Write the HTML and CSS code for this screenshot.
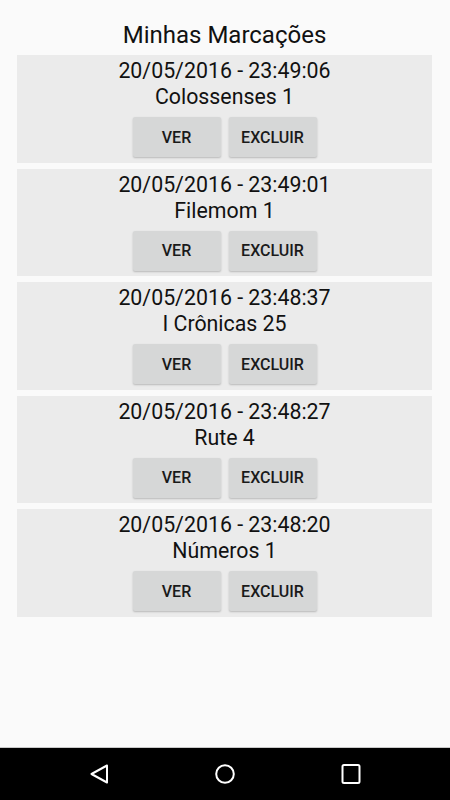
FILE: index.html
```html
<!DOCTYPE html>
<html lang="pt">
<head>
<meta charset="utf-8">
<title>Minhas Marcações</title>
<link rel="stylesheet" href="styles.css">
</head>
<body>
<div class="screen">
  <main class="content">
    <h1 class="title">Minhas Marcações</h1>
    <ul class="list">
      <li class="card">
        <div class="date">20/05/2016 - 23:49:06</div>
        <div class="ref">Colossenses 1</div>
        <div class="actions"><button class="btn">VER</button><button class="btn">EXCLUIR</button></div>
      </li>
      <li class="card">
        <div class="date">20/05/2016 - 23:49:01</div>
        <div class="ref">Filemom 1</div>
        <div class="actions"><button class="btn">VER</button><button class="btn">EXCLUIR</button></div>
      </li>
      <li class="card">
        <div class="date">20/05/2016 - 23:48:37</div>
        <div class="ref">I Crônicas 25</div>
        <div class="actions"><button class="btn">VER</button><button class="btn">EXCLUIR</button></div>
      </li>
      <li class="card">
        <div class="date">20/05/2016 - 23:48:27</div>
        <div class="ref">Rute 4</div>
        <div class="actions"><button class="btn">VER</button><button class="btn">EXCLUIR</button></div>
      </li>
      <li class="card">
        <div class="date">20/05/2016 - 23:48:20</div>
        <div class="ref">Números 1</div>
        <div class="actions"><button class="btn">VER</button><button class="btn">EXCLUIR</button></div>
      </li>
    </ul>
  </main>
  <nav class="navbar">
    <svg class="nav-icon" width="24" height="24" viewBox="0 0 24 24"><path d="M20 3.5 L4.5 12 L20 20.5 Z" fill="none" stroke="#fff" stroke-width="2" stroke-linejoin="round"/></svg>
    <svg class="nav-icon" width="24" height="24" viewBox="0 0 24 24"><circle cx="12" cy="12" r="8.8" fill="none" stroke="#fff" stroke-width="2"/></svg>
    <svg class="nav-icon" width="24" height="24" viewBox="0 0 24 24"><rect x="3.5" y="3" width="17" height="18" rx="1.5" fill="none" stroke="#fff" stroke-width="2"/></svg>
  </nav>
</div>
</body>
</html>
```

FILE: styles.css
```css
* { box-sizing: border-box; }
html, body { margin: 0; padding: 0; }
body {
  background: #fafafa;
  font-family: Roboto, "Liberation Sans", sans-serif;
  color: #111;
}
.screen {
  width: 450px;
  height: 800px;
  display: flex;
  flex-direction: column;
}
.content {
  flex: 1;
  padding: 21px 18px 0 17px;
}
.title {
  margin: 0 0 6px;
  font-size: 24px;
  font-weight: 400;
  line-height: 28px;
  text-align: center;
  color: #111;
}
.list {
  list-style: none;
  margin: 0;
  padding: 0;
  display: flex;
  flex-direction: column;
  gap: 6px;
}
.card {
  height: 107.5px;
  background: #ebebeb;
  padding-top: 3px;
  text-align: center;
  display: flex;
  flex-direction: column;
  align-items: center;
}
.date, .ref {
  font-size: 21.33px;
  line-height: 26px;
  color: #111;
}
.actions {
  margin-top: 7px;
  display: flex;
  gap: 8px;
}
.btn {
  width: 88px;
  height: 40px;
  border: none;
  border-radius: 2px;
  background: #d6d7d7;
  box-shadow: 0 1px 2px rgba(0,0,0,0.22);
  font-family: Roboto, "Liberation Sans", sans-serif;
  font-size: 16px;
  font-weight: 500;
  color: #1a1a1a;
  padding: 0;
}
.navbar {
  height: 53px;
  background: #000;
  border-top: 1px solid #c8c8c8;
  display: flex;
  justify-content: center;
  align-items: center;
  gap: 102px;
}
.nav-icon { display: block; }
```
